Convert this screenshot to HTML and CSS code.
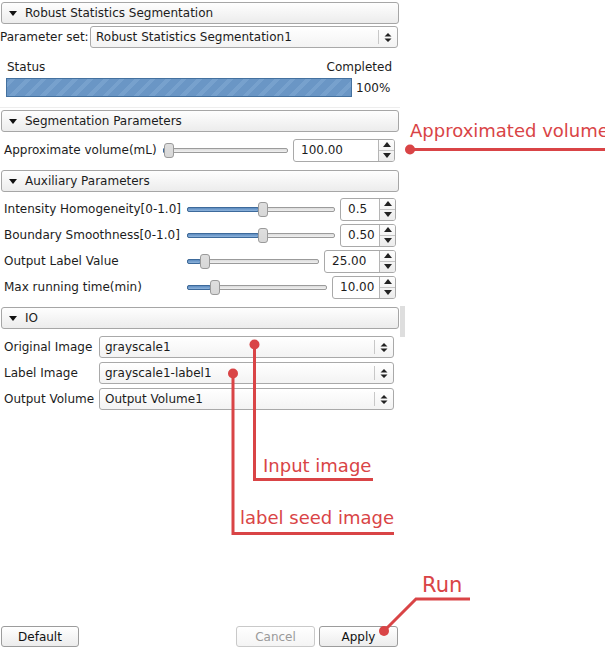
FILE: index.html
```html
<!DOCTYPE html>
<html>
<head>
<meta charset="utf-8">
<link rel="stylesheet" href="styles.css">
</head>
<body>
<div class="panel">
  <div class="hdr h1"><span class="tri"></span>Robust Statistics Segmentation</div>
  <div class="prow">
    <span class="plbl">Parameter set:</span>
    <div class="combo">Robust Statistics Segmentation1<span class="carr"><svg width="8" height="11" viewBox="0 0 8 11"><path d="M0.5 4.5L4 1L7.5 4.5Z M0.5 6.5L4 10L7.5 6.5Z" fill="#222"/></svg></span></div>
  </div>
  <div class="status"><span>Status</span><span>Completed</span></div>
  <div class="prog"><div class="bar"></div><span class="pct">100%</span></div>
  <div class="sep"></div>
  <div class="hdr h2"><span class="tri"></span>Segmentation Parameters</div>
  <div class="srow r-approx">
    <span class="slbl w-approx">Approximate volume(mL)</span>
    <div class="slider"><div class="fill" style="width:0px"></div><div class="handle" style="left:0px"></div></div>
    <div class="spin w-102"><span class="val">100.00</span><span class="sarr"><span class="up"></span><span class="dn"></span></span></div>
  </div>
  <div class="hdr h3"><span class="tri"></span>Auxiliary Parameters</div>
  <div class="aux">
    <div class="srow">
      <span class="slbl w-aux">Intensity Homogeneity[0-1.0]</span>
      <div class="slider"><div class="fill" style="width:72px"></div><div class="handle" style="left:70px"></div></div>
      <div class="spin w-55"><span class="val">0.5</span><span class="sarr"><span class="up"></span><span class="dn"></span></span></div>
    </div>
    <div class="srow">
      <span class="slbl w-aux">Boundary Smoothness[0-1.0]</span>
      <div class="slider"><div class="fill" style="width:72px"></div><div class="handle" style="left:70px"></div></div>
      <div class="spin w-55"><span class="val">0.50</span><span class="sarr"><span class="up"></span><span class="dn"></span></span></div>
    </div>
    <div class="srow">
      <span class="slbl w-aux">Output Label Value</span>
      <div class="slider"><div class="fill" style="width:14px"></div><div class="handle" style="left:12px"></div></div>
      <div class="spin w-72"><span class="val">25.00</span><span class="sarr"><span class="up"></span><span class="dn"></span></span></div>
    </div>
    <div class="srow">
      <span class="slbl w-aux">Max running time(min)</span>
      <div class="slider"><div class="fill" style="width:24px"></div><div class="handle" style="left:22px"></div></div>
      <div class="spin w-64"><span class="val">10.00</span><span class="sarr"><span class="up"></span><span class="dn"></span></span></div>
    </div>
  </div>
  <div class="hdr h4"><span class="tri"></span>IO</div>
  <div class="io">
    <div class="iorow"><span class="iolbl">Original Image</span><div class="combo">grayscale1<span class="carr"><svg width="8" height="11" viewBox="0 0 8 11"><path d="M0.5 4.5L4 1L7.5 4.5Z M0.5 6.5L4 10L7.5 6.5Z" fill="#222"/></svg></span></div></div>
    <div class="iorow"><span class="iolbl">Label Image</span><div class="combo">grayscale1-label1<span class="carr"><svg width="8" height="11" viewBox="0 0 8 11"><path d="M0.5 4.5L4 1L7.5 4.5Z M0.5 6.5L4 10L7.5 6.5Z" fill="#222"/></svg></span></div></div>
    <div class="iorow"><span class="iolbl">Output Volume</span><div class="combo">Output Volume1<span class="carr"><svg width="8" height="11" viewBox="0 0 8 11"><path d="M0.5 4.5L4 1L7.5 4.5Z M0.5 6.5L4 10L7.5 6.5Z" fill="#222"/></svg></span></div></div>
  </div>
  <div class="buttons">
    <div class="btn">Default</div>
    <div class="grow"></div>
    <div class="btn disabled">Cancel</div>
    <div class="btn">Apply</div>
  </div>
</div>
<div class="scrollbar"></div>

<svg class="overlay" width="605" height="649" viewBox="0 0 605 649">
  <g stroke="#d94446" stroke-width="3" fill="none">
    <path d="M410 149.5H605"/>
    <path d="M254.5 345V479.5H373"/>
    <path d="M233 373V533.5H394"/>
    <path d="M384 631L416 599H470"/>
  </g>
  <g fill="#d94446">
    <circle cx="410" cy="149.5" r="5"/>
    <circle cx="254.5" cy="344.5" r="5"/>
    <circle cx="233" cy="373.5" r="5"/>
    <circle cx="384" cy="631" r="5"/>
  </g>
</svg>
<span class="note n-vol">Approximated volume</span>
<span class="note n-in">Input image</span>
<span class="note n-seed">label seed image</span>
<span class="note n-run">Run</span>
</body>
</html>
```

FILE: styles.css
```css
* { box-sizing: border-box; }
body {
  margin: 0;
  width: 605px;
  height: 649px;
  position: relative;
  overflow: hidden;
  background: #fff;
  font-family: "DejaVu Sans", "Noto Sans", sans-serif;
  font-size: 12px;
  color: #1c1c1c;
}
.panel {
  width: 400px;
  height: 649px;
  display: flex;
  flex-direction: column;
  padding: 2px 0 2px 0;
}
.hdr {
  margin-left: 1px;
  width: 398px;
  height: 22px;
  flex: none;
  border: 1px solid #a6a6a6;
  border-radius: 3px;
  background: linear-gradient(#fefefe, #ececec);
  display: flex;
  align-items: center;
  padding-left: 7px;
  gap: 8px;
}
.tri {
  width: 0;
  height: 0;
  border-left: 4.5px solid transparent;
  border-right: 4.5px solid transparent;
  border-top: 5px solid #111;
}
.h2 { margin-top: 2px; }
.h3 { margin-top: 8px; }
.h4 { margin-top: 8px; }

.prow {
  margin-top: 2px;
  height: 22px;
  display: flex;
  align-items: center;
  padding-right: 2px;
}
.plbl { width: 90px; flex: none; }

.combo {
  flex: 1;
  height: 22px;
  border: 1px solid #a9a9a9;
  border-radius: 3px;
  background: linear-gradient(#ffffff, #f3f3f3);
  display: flex;
  align-items: center;
  padding-left: 5px;
  position: relative;
}
.carr {
  margin-left: auto;
  width: 19px;
  height: 14px;
  border-left: 1px solid #c8c8c8;
  display: flex;
  align-items: center;
  justify-content: center;
}

.status {
  margin-top: 12px;
  height: 14px;
  display: flex;
  justify-content: space-between;
  align-items: center;
  padding: 0 8px 0 7px;
}
.prog {
  margin-top: 4px;
  height: 19px;
  display: flex;
  align-items: center;
  padding-left: 6px;
}
.bar {
  width: 346px;
  height: 19px;
  border: 1px solid #44719f;
  background: repeating-linear-gradient(-45deg, #6a96c5 0px, #6a96c5 7px, #77a1cd 7px, #77a1cd 11px);
}
.pct { margin-left: 4px; }
.sep {
  margin-top: 10px;
  height: 1px;
  background: #ededed;
}

.srow {
  height: 24px;
  display: flex;
  align-items: center;
  padding: 0 4px 0 4px;
}
.r-approx { margin-top: 6px; padding-right: 5px; }
.slbl { flex: none; white-space: nowrap; }
.w-approx { width: 159px; }
.w-aux { width: 183px; }

.slider {
  flex: 1;
  height: 5px;
  margin-right: 5px;
  position: relative;
  border: 1px solid #9b9b9b;
  border-radius: 2px;
  background: linear-gradient(#dcdcdc, #f0f0f0);
}
.fill {
  position: absolute;
  left: -1px;
  top: -1px;
  height: 5px;
  border: 1px solid #3d6a9b;
  border-radius: 2px;
  background: linear-gradient(#5d8cc0, #8fb4dc);
}
.handle {
  position: absolute;
  top: -6px;
  width: 10px;
  height: 15px;
  border: 1px solid #9a9a9a;
  border-radius: 3px;
  background:
    radial-gradient(circle, #cfcfcf 0.6px, transparent 0.9px) 0 0 / 2px 2px,
    linear-gradient(#fbfbfb, #e6e6e6);
}

.spin {
  flex: none;
  height: 23px;
  border: 1px solid #a9a9a9;
  border-radius: 3px;
  background: #fff;
  display: flex;
  align-items: center;
  padding-left: 7px;
}
.w-102 { width: 102px; }
.w-55 { width: 56px; }
.w-72 { width: 72px; }
.w-64 { width: 64px; }
.val { flex: 1; }
.sarr {
  width: 16px;
  height: 21px;
  border-left: 1px solid #b5b5b5;
  display: flex;
  flex-direction: column;
  background: linear-gradient(#fdfdfd, #ececec);
  border-radius: 0 2px 2px 0;
}
.up, .dn {
  flex: 1;
  display: flex;
  align-items: center;
  justify-content: center;
}
.up { border-bottom: 1px solid #c4c4c4; }
.up::before {
  content: "";
  border-left: 4px solid transparent;
  border-right: 4px solid transparent;
  border-bottom: 5px solid #222;
}
.dn::before {
  content: "";
  border-left: 4px solid transparent;
  border-right: 4px solid transparent;
  border-top: 5px solid #222;
}

.aux {
  margin-top: 5px;
  display: flex;
  flex-direction: column;
  gap: 2px;
}
.io {
  margin-top: 7px;
  display: flex;
  flex-direction: column;
  gap: 4px;
}
.iorow {
  height: 22px;
  flex: none;
  display: flex;
  align-items: center;
  padding: 0 6px 0 4px;
}
.iolbl { width: 95px; flex: none; white-space: nowrap; }

.buttons {
  margin-top: auto;
  height: 21px;
  display: flex;
  padding: 0 2px 0 1px;
  gap: 4px;
}
.grow { flex: 1; }
.btn {
  width: 79px;
  height: 21px;
  border: 1px solid #9c9c9c;
  border-radius: 3px;
  background: linear-gradient(#ffffff, #ececec);
  display: flex;
  align-items: center;
  justify-content: center;
  color: #111;
}
.btn:first-child { width: 78px; }
.btn.disabled { color: #9a9a9a; border-color: #c9c9c9; background: linear-gradient(#ffffff, #f4f4f4); }

.scrollbar {
  position: absolute;
  left: 400px;
  top: 306px;
  width: 5px;
  height: 31px;
  background: #dedede;
}

.overlay {
  position: absolute;
  left: 0;
  top: 0;
  pointer-events: none;
}
.note {
  position: absolute;
  color: #d94446;
  font-family: "DejaVu Sans", sans-serif;
  font-size: 18px;
  line-height: 1;
  white-space: nowrap;
}
.n-vol { left: 410px; top: 122px; }
.n-in { left: 263px; top: 457px; }
.n-seed { left: 240px; top: 509px; }
.n-run { left: 422px; top: 575px; font-size: 21px; }
```
